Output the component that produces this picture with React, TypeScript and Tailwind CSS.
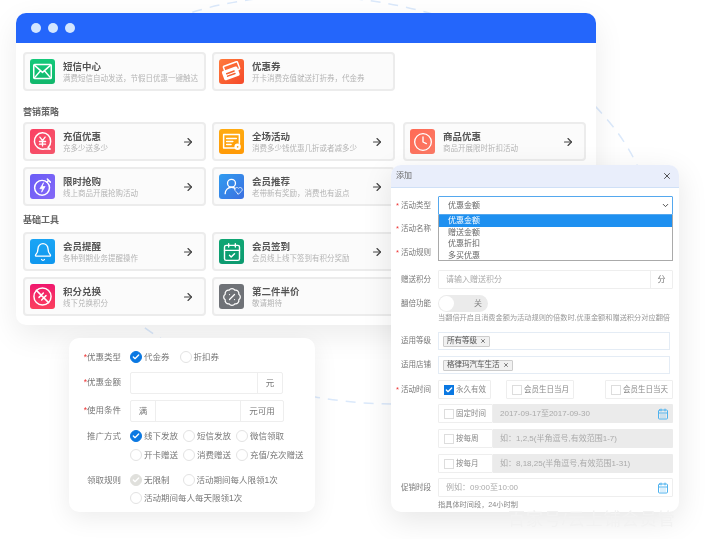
import { ArrowRight, X, ChevronDown, Check, CalendarDays, Bell, CalendarCheck, Clock, BadgePercent, UserRound, Heart } from 'lucide-react';
import type { ReactNode } from 'react';

const cjk = 'font-["Liberation_Sans","Noto_Sans_CJK_SC",sans-serif]';

type Tool = { title: string; sub: string; bg: string; icon: ReactNode; arrow?: boolean };

const Glyph = ({ children }: { children: ReactNode }) => (
  <svg width="21" height="21" viewBox="0 0 24 24" fill="none" stroke="currentColor" strokeWidth="1.7" strokeLinecap="round" strokeLinejoin="round">
    {children}
  </svg>
);

const IconBox = ({ bg, children }: { bg: string; children: ReactNode }) => (
  <div className={`w-[25px] h-[25px] rounded-[3px] flex items-center justify-center shrink-0 text-white ${bg}`}>{children}</div>
);

const ToolCard = ({ title, sub, bg, icon, arrow = true }: Tool) => (
  <div className="w-[183px] h-[39px] border-2 border-[#ececec] rounded-[4px] bg-[#fbfbfb] flex items-center pl-[5px] pr-[10px] gap-[8px]">
    <IconBox bg={bg}>{icon}</IconBox>
    <div className="flex-1 min-w-0">
      <div className="text-[9.5px] leading-[13px] font-bold text-[#555]">{title}</div>
      <div className="text-[7.5px] leading-[11px] text-[#b5b5b5] whitespace-nowrap">{sub}</div>
    </div>
    {arrow && <ArrowRight size={12} strokeWidth={2.3} className="text-[#444] shrink-0" />}
  </div>
);

const row1: Tool[] = [
  {
    title: '短信中心',
    sub: '满费短信自动发送，节假日优惠一键触达',
    bg: 'bg-gradient-to-b from-[#14c97a] to-[#12b76c]',
    icon: (
      <Glyph>
        <rect x="2" y="4" width="20" height="16" rx="1" />
        <path d="M3 5l9 8 9-8M3 19l6.5-7.5M21 19l-6.5-7.5" />
      </Glyph>
    ),
    arrow: false,
  },
  {
    title: '优惠券',
    sub: '开卡消费充值就送打折券，代金券',
    bg: 'bg-gradient-to-br from-[#ff7a3c] to-[#f5482a]',
    icon: (
      <Glyph>
        <g transform="rotate(-20 12 12)">
          <rect x="5" y="3.5" width="17" height="9" rx="1" />
          <rect x="2" y="9" width="17" height="9.5" rx="1" fill="white" stroke="white" />
          <path d="M6 12.5h9M6 15.5h9" stroke="#f5602f" />
        </g>
      </Glyph>
    ),
    arrow: false,
  },
];
const row2: Tool[] = [
  {
    title: '充值优惠',
    sub: '充多少送多少',
    bg: 'bg-gradient-to-br from-[#fb3f63] to-[#f4566b]',
    icon: (
      <Glyph>
        <path d="M20.5 20.5H14A9.3 9.3 0 1 1 21.3 12a9 9 0 0 1-2.6 6.5" />
        <path d="M20.5 20.5l-2-1.8" />
        <path d="M9 7l3 4 3-4M8.5 12h7M8.5 15h7M12 11v6" strokeWidth="1.5" />
      </Glyph>
    ),
  },
  {
    title: '全场活动',
    sub: '消费多少钱优惠几折或者减多少',
    bg: 'bg-gradient-to-b from-[#ffab12] to-[#ff9a06]',
    icon: (
      <Glyph>
        <path d="M16 19.5H3V4h18v10" />
        <path d="M6.5 8.5h11M6.5 12h7M6.5 15.5h5" />
        <circle cx="19" cy="18" r="2.8" fill="white" stroke="white" />
        <circle cx="19" cy="18" r="1" fill="#ff9f0a" stroke="none" />
      </Glyph>
    ),
  },
  { title: '商品优惠', sub: '商品开展限时折扣活动', bg: 'bg-gradient-to-br from-[#ff6a55] to-[#fb7a66]', icon: <Clock size={20} strokeWidth={1.6} /> },
];
const row3: Tool[] = [
  {
    title: '限时抢购',
    sub: '线上商品开展抢购活动',
    bg: 'bg-gradient-to-br from-[#6a5cf6] to-[#8468f7]',
    icon: (
      <Glyph>
        <circle cx="11.5" cy="13.5" r="8.5" />
        <path d="M17.5 3.5l3.5 3.5M19 5l-2 2" />
        <path d="M13 8l-4 6.5h3l-1 4 4-6.5h-3z" fill="white" strokeWidth="0.8" />
      </Glyph>
    ),
  },
  {
    title: '会员推荐',
    sub: '老带新有奖励，消费也有返点',
    bg: 'bg-gradient-to-br from-[#2f9cf0] to-[#3b6fe0]',
    icon: (
      <span className="relative block w-[19px] h-[19px]">
        <UserRound size={19} strokeWidth={1.7} />
        <Heart size={9} strokeWidth={2} className="absolute right-[-2px] bottom-[1px] fill-[#3b7fe6]" />
      </span>
    ),
  },
];
const row4: Tool[] = [
  { title: '会员提醒', sub: '各种到期业务提醒操作', bg: 'bg-gradient-to-b from-[#1aa5f5] to-[#0f97ee]', icon: <Bell size={20} strokeWidth={1.6} /> },
  { title: '会员签到', sub: '会员线上线下签到有积分奖励', bg: 'bg-gradient-to-b from-[#0fa673] to-[#0c9a70]', icon: <CalendarCheck size={20} strokeWidth={1.7} /> },
];
const row5: Tool[] = [
  {
    title: '积分兑换',
    sub: '线下兑换积分',
    bg: 'bg-gradient-to-b from-[#f0146e] to-[#fb3f5c]',
    icon: (
      <Glyph>
        <circle cx="12" cy="12" r="9.8" />
        <path d="M5 5l14 14M8 13l5-5M11 16l5-5" />
      </Glyph>
    ),
  },
  { title: '第二件半价', sub: '敬请期待', bg: 'bg-[#6f7277]', icon: <BadgePercent size={20} strokeWidth={1.5} />, arrow: false },
];

const Row = ({ items }: { items: Tool[] }) => (
  <div className="flex gap-[6px]">
    {items.map((t, i) => (
      <div key={t.title} className={i === 2 ? 'ml-[2px]' : ''}>
        <ToolCard {...t} />
      </div>
    ))}
  </div>
);

const Radio = ({ label, on, muted }: { label: string; on?: boolean; muted?: boolean }) => (
  <span className="flex items-center gap-[2px] whitespace-nowrap leading-[12px]">
    <span
      className={`w-[12px] h-[12px] rounded-full flex items-center justify-center border ${
        on ? (muted ? 'bg-[#e0e0dc] border-[#e0e0dc]' : 'bg-[#0a78e2] border-[#0a78e2]') : 'bg-white border-[#e3e3e3]'
      }`}
    >
      {on && <Check size={8} strokeWidth={4} className="text-white" />}
    </span>
    {label}
  </span>
);

const CouponLabel = ({ children, star, pad }: { children: string; star?: boolean; pad?: boolean }) => (
  <div className={`w-[43px] text-right shrink-0 leading-[12px] whitespace-nowrap ${pad ? 'pt-[4px]' : ''}`}>
    {star && <span className="text-[#ee3333]">*</span>}
    {children}
  </div>
);

const CouponForm = () => (
  <div className="absolute left-[69px] top-[338px] w-[246px] h-[174px] bg-white rounded-[10px] shadow-[0_6px_24px_rgba(0,0,0,0.08)] pl-[9px] pt-[13px] text-[8.5px] text-[#777]">
    <div className="flex gap-[9px] h-[21px]">
      <CouponLabel star>优惠类型</CouponLabel>
      <div className="flex gap-[10px] h-[12px]">
        <Radio label="代金券" on />
        <Radio label="折扣券" />
      </div>
    </div>
    <div className="flex gap-[9px] h-[28px]">
      <CouponLabel star pad>优惠金额</CouponLabel>
      <div className="flex w-[153px] h-[22px] border border-[#eeeeee] rounded-[2px]">
        <div className="flex-1" />
        <div className="w-[25px] border-l border-[#eeeeee] flex items-center justify-center">元</div>
      </div>
    </div>
    <div className="flex gap-[9px] h-[30px]">
      <CouponLabel star pad>使用条件</CouponLabel>
      <div className="flex w-[154px] h-[22px] border border-[#eeeeee] rounded-[2px]">
        <div className="w-[25px] border-r border-[#eeeeee] flex items-center justify-center">满</div>
        <div className="flex-1" />
        <div className="w-[43px] border-l border-[#eeeeee] flex items-center justify-center">元可用</div>
      </div>
    </div>
    <div className="flex gap-[9px] h-[44px]">
      <CouponLabel>推广方式</CouponLabel>
      <div className="flex flex-col gap-[7px]">
        <div className="flex gap-[5px]">
          <Radio label="线下发放" on />
          <Radio label="短信发放" />
          <Radio label="微信领取" />
        </div>
        <div className="flex gap-[5px]">
          <Radio label="开卡赠送" />
          <Radio label="消费赠送" />
          <Radio label="充值/充次赠送" />
        </div>
      </div>
    </div>
    <div className="flex gap-[9px]">
      <CouponLabel>领取规则</CouponLabel>
      <div className="flex flex-col gap-[6px]">
        <div className="flex gap-[13px]">
          <Radio label="无限制" on muted />
          <Radio label="活动期间每人限领1次" />
        </div>
        <Radio label="活动期间每人每天限领1次" />
      </div>
    </div>
  </div>
);

const FieldLabel = ({ children, star }: { children: string; star?: boolean }) => (
  <div className="w-[40px] shrink-0 flex items-center justify-end gap-[2px] text-[7.5px] text-[#777] whitespace-nowrap">
    {star && <span className="text-[#ee3333]">*</span>}
    {children}
  </div>
);

const CheckCell = ({ label, on, w }: { label: string; on?: boolean; w: string }) => (
  <div className={`h-[19px] ${w} shrink-0 border border-[#eeeeee] bg-white rounded-[1px] flex items-center gap-[2px] pl-[5px] whitespace-nowrap text-[7.5px]`}>
    {on ? (
      <span className="w-[10px] h-[10px] bg-[#0a78e2] flex items-center justify-center">
        <Check size={8} strokeWidth={4} className="text-white" />
      </span>
    ) : (
      <span className="w-[10px] h-[10px] border border-[#ddd] bg-white shrink-0" />
    )}
    {label}
  </div>
);

const TimeRow = ({ label, hint, cal }: { label: string; hint: string; cal?: boolean }) => (
  <div className="flex ml-[47px] h-[19px]">
    <CheckCell label={label} w="w-[55px]" />
    <div className="flex-1 bg-[#ebebeb] rounded-r-[1px] flex items-center justify-between pl-[7px] pr-[4px] text-[#aaa] whitespace-nowrap">
      <span>{hint}</span>
      {cal && <CalendarDays size={12} className="text-[#4fb2ee]" />}
    </div>
  </div>
);

const Tag = ({ children }: { children: string }) => (
  <span className="h-[11px] px-[3px] bg-[#f1f1f1] border border-[#ccc] rounded-[1px] flex items-center gap-[3px] text-[#555] leading-none text-[7.5px]">
    {children}
    <X size={6} strokeWidth={3} />
  </span>
);

const AddDialog = () => (
  <div className="absolute left-[391px] top-[165px] w-[288px] h-[347px] bg-white rounded-[10px] shadow-[0_8px_30px_rgba(0,0,0,0.1)] overflow-hidden text-[8px] text-[#888]">
    <div className="h-[23px] bg-[#e9eefb] border-b border-[#cfe0f7] flex items-center justify-between pl-[5px] pr-[7px] text-[8px] text-[#666]">
      添加
      <X size={10} strokeWidth={2} className="text-[#333]" />
    </div>
    <div className="pr-[6px] pt-[8px] flex flex-col">
      <div className="relative flex h-[19px]">
        <FieldLabel star>活动类型</FieldLabel>
        <div className="ml-[7px] flex-1 border border-[#55a8ee] rounded-t-[1px] flex items-center justify-between pl-[9px] pr-[2px] text-[#666]">
          优惠金额
          <ChevronDown size={9} strokeWidth={2.5} className="text-[#444]" />
        </div>
        <div className="absolute left-[47px] right-0 top-[19px] h-[46px] z-10 bg-white border border-[#aaa] border-t-0 leading-[11.3px] text-[#666]">
          <div className="bg-[#1e90f0] text-white pl-[9px] h-[12px]">优惠金额</div>
          <div className="pl-[9px]">赠送金额</div>
          <div className="pl-[9px]">优惠折扣</div>
          <div className="pl-[9px]">多买优惠</div>
        </div>
      </div>
      <div className="flex h-[24px] items-center mt-[2px]">
        <FieldLabel star>活动名称</FieldLabel>
      </div>
      <div className="flex h-[24px] items-center">
        <FieldLabel star>活动规则</FieldLabel>
      </div>
      <div className="flex h-[19px] mt-[5px]">
        <FieldLabel>赠送积分</FieldLabel>
        <div className="ml-[7px] flex-1 border border-[#eeeeee] rounded-[1px] flex items-center text-[#aaa]">
          <span className="flex-1 pl-[7px]">请输入赠送积分</span>
          <span className="w-[22px] h-full border-l border-[#eeeeee] flex items-center justify-center text-[#777]">分</span>
        </div>
      </div>
      <div className="flex h-[17px] mt-[6px]">
        <FieldLabel>翻倍功能</FieldLabel>
        <div className="ml-[7px] w-[50px] h-[17px] rounded-full bg-[#ebebeb] flex items-center justify-between pl-[1px] pr-[6px] text-[#888]">
          <span className="w-[15px] h-[15px] rounded-full bg-white" />关
        </div>
      </div>
      <div className="ml-[47px] h-[12px] leading-[12px] text-[7.2px] whitespace-nowrap text-[#999]">当翻倍开启且消费金额为活动规则的倍数时,优惠金额和赠送积分对应翻倍</div>
      <div className="flex h-[18px] mt-[8px]">
        <FieldLabel>适用等级</FieldLabel>
        <div className="ml-[7px] w-[232px] border border-[#e4ecf5] flex items-center pl-[4px]">
          <Tag>所有等级</Tag>
        </div>
      </div>
      <div className="flex h-[18px] mt-[6px]">
        <FieldLabel>适用店铺</FieldLabel>
        <div className="ml-[7px] w-[232px] border border-[#e4ecf5] flex items-center pl-[4px]">
          <Tag>格律玛汽车生活</Tag>
        </div>
      </div>
      <div className="flex h-[19px] mt-[6px]">
        <FieldLabel star>活动时间</FieldLabel>
        <div className="ml-[7px] flex-1 flex">
          <CheckCell label="永久有效" on w="w-[53px]" />
          <div className="ml-[15px]">
            <CheckCell label="会员生日当月" w="w-[68px]" />
          </div>
          <div className="ml-auto">
            <CheckCell label="会员生日当天" w="w-[68px]" />
          </div>
        </div>
      </div>
      <div className="flex flex-col gap-[6px] mt-[5px]">
        <TimeRow label="固定时间" hint="2017-09-17至2017-09-30" cal />
        <TimeRow label="按每周" hint="如：1,2,5(半角逗号,有效范围1-7)" />
        <TimeRow label="按每月" hint="如：8,18,25(半角逗号,有效范围1-31)" />
      </div>
      <div className="flex h-[19px] mt-[5px]">
        <FieldLabel>促销时段</FieldLabel>
        <div className="ml-[7px] flex-1 border border-[#eeeeee] rounded-[1px] flex items-center justify-between pl-[7px] pr-[3px] text-[#aaa]">
          例如：09:00至10:00
          <CalendarDays size={12} className="text-[#4fb2ee]" />
        </div>
      </div>
      <div className="ml-[47px] mt-[2px] text-[7.2px] leading-[11px] text-[#888]">指具体时间段，24小时制</div>
    </div>
  </div>
);

export default function App() {
  return (
    <div className={`relative w-[708px] h-[539px] bg-white overflow-hidden blur-[0.35px] ${cjk}`}>
      {/* dashed ring behind the panels */}
      <svg className="absolute inset-0" width="708" height="539" fill="none">
        <ellipse cx="350" cy="200" rx="305" ry="200" transform="rotate(10 350 200)" stroke="#dbe9fb" strokeWidth="1.5" strokeDasharray="10 8" />
      </svg>

      <div className="absolute left-[16px] top-[13px] w-[580px] h-[312px] bg-white rounded-[10px] shadow-[0_10px_30px_rgba(0,0,0,0.08)] overflow-hidden">
        <div className="h-[30px] bg-[#2466fb] flex items-center gap-[7px] pl-[15px]">
          <span className="w-[10px] h-[10px] rounded-full bg-[#d3e6ff]" />
          <span className="w-[10px] h-[10px] rounded-full bg-[#d3e6ff]" />
          <span className="w-[10px] h-[10px] rounded-full bg-[#d3e6ff]" />
        </div>
        <div className="pl-[7px] pt-[9px]">
          <Row items={row1} />
          <div className="h-[31px] pt-[15px] text-[9px] leading-[12px] font-bold text-[#666]">营销策略</div>
          <Row items={row2} />
          <div className="h-[6px]" />
          <Row items={row3} />
          <div className="h-[26px] pt-[8px] text-[9px] leading-[12px] font-bold text-[#666]">基础工具</div>
          <Row items={row4} />
          <div className="h-[6px]" />
          <Row items={row5} />
        </div>
      </div>

      <CouponForm />
      <AddDialog />

      <div className="absolute left-[508px] top-[511px] text-[17px] leading-[18px] tracking-[1px] text-[#f2f2f2] whitespace-nowrap">百家号/云上铺会员管</div>
    </div>
  );
}
